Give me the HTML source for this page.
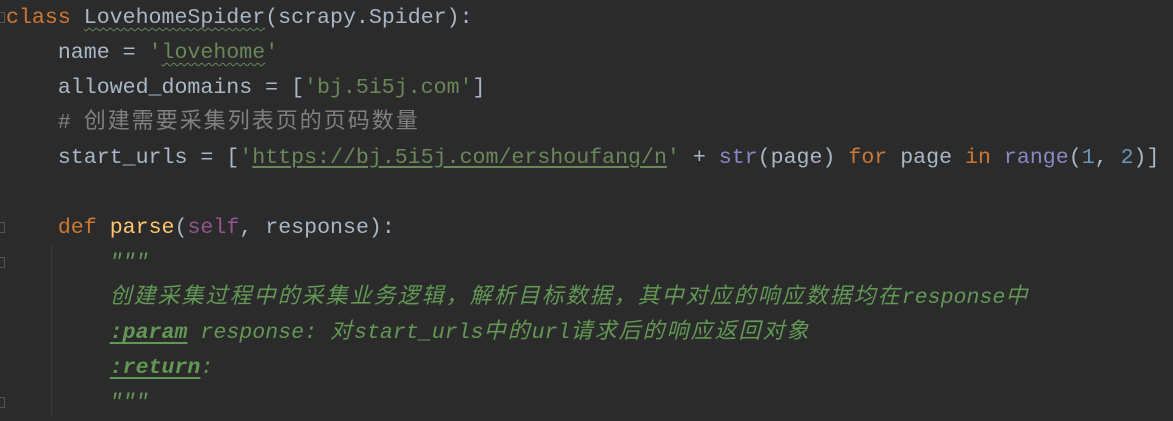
<!DOCTYPE html>
<html><head><meta charset="utf-8"><style>
html,body{margin:0;padding:0;background:#2b2b2b;width:1173px;height:417px;overflow:hidden}
.l{position:absolute;left:6px;white-space:pre;font-family:"Liberation Mono","Noto Sans CJK SC",monospace;font-size:21.6px;line-height:35px;height:35px;color:#a9b7c6}
.k{color:#cc7832}.s{color:#6a8759}.c{color:#808080}.d{color:#629755;font-style:italic}
.f{color:#ffc66d}.self{color:#94558d}.b{color:#8888c6}.n{color:#6897bb}
.z{font-family:"Noto Sans CJK SC",sans-serif;font-size:22px;letter-spacing:2px;font-style:normal;line-height:1}
.d .z{font-style:oblique}
.w{text-decoration:underline wavy #6a8759;text-decoration-thickness:1px;text-underline-offset:4px}
.u{text-decoration:underline;text-underline-offset:3px}
.tag{font-weight:bold;text-decoration:underline;text-underline-offset:4px}
.fold{position:absolute;left:0;width:5px;height:11px;border:1px solid #555;border-left:none;box-sizing:border-box}
.guide{position:absolute;left:51px;top:245px;width:1px;height:172px;background:#393939}
</style></head><body>
<div class="guide"></div>
<div class="fold" style="top:12px"></div>
<div class="fold" style="top:222px"></div>
<div class="fold" style="top:257px"></div>
<div class="fold" style="top:397px"></div>
<div class="l" style="top:1px"><span class="k">class</span> <span class="w">LovehomeSpider</span>(scrapy.Spider):</div>
<div class="l" style="top:36px">    name = <span class="s">'<span class="w">lovehome</span>'</span></div>
<div class="l" style="top:71px">    allowed_domains = [<span class="s">'bj.5i5j.com'</span>]</div>
<div class="l" style="top:106px">    <span class="c"># <span class="z">创建需要采集列表页的页码数量</span></span></div>
<div class="l" style="top:141px">    start_urls = [<span class="s">'<span class="u">https://bj.5i5j.com/ershoufang/n</span>'</span> + <span class="b">str</span>(page) <span class="k">for</span> page <span class="k">in</span> <span class="b">range</span>(<span class="n">1</span>, <span class="n">2</span>)]</div>
<div class="l" style="top:211px">    <span class="k">def</span> <span class="f">parse</span>(<span class="self">self</span>, response):</div>
<div class="l d" style="top:246px">        """</div>
<div class="l d" style="top:281px">        <span class="z">创建采集过程中的采集业务逻辑，解析目标数据，其中对应的响应数据均在</span>response<span class="z">中</span></div>
<div class="l d" style="top:316px">        <span class="tag">:param</span> response: <span class="z">对</span>start_urls<span class="z">中的</span>url<span class="z">请求后的响应返回对象</span></div>
<div class="l d" style="top:351px">        <span class="tag">:return</span>:</div>
<div class="l d" style="top:386px">        """</div>
</body></html>
